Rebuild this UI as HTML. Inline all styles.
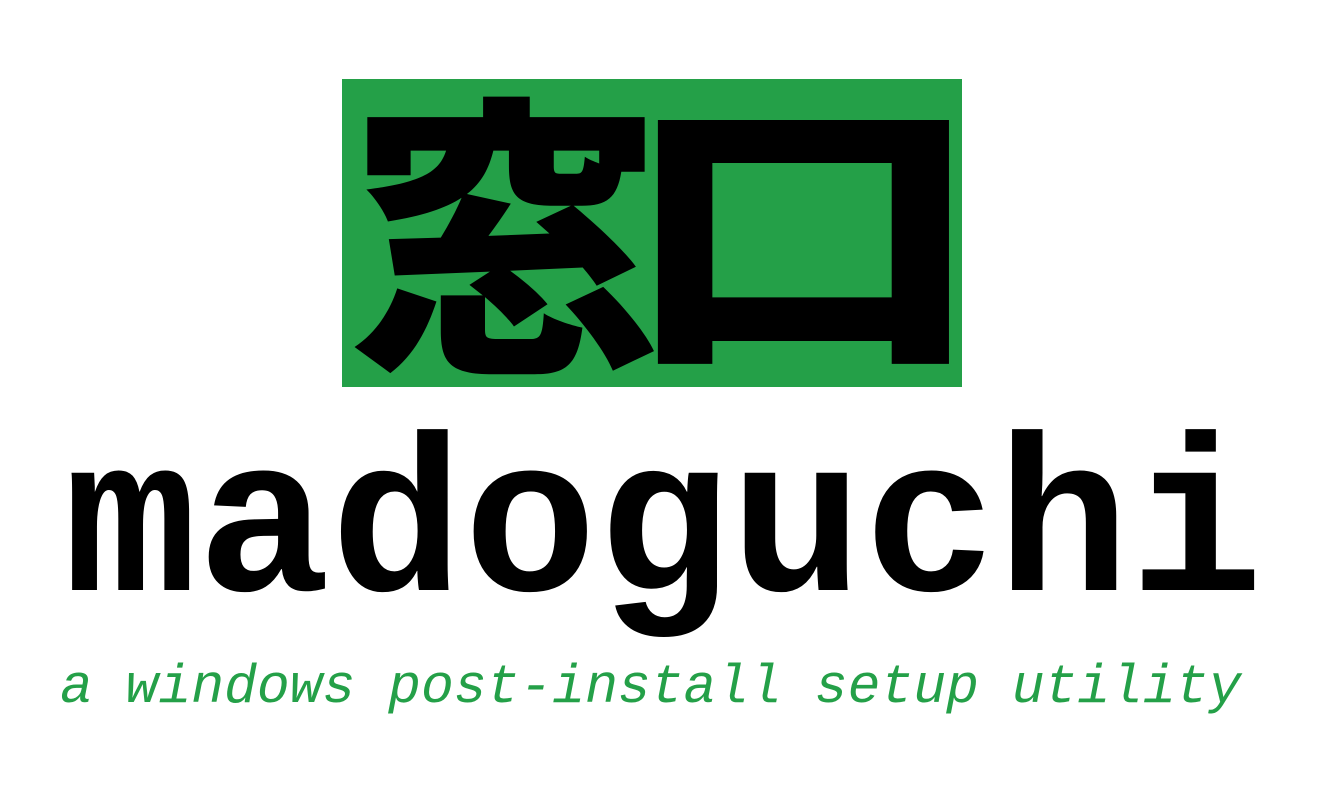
<!DOCTYPE html>
<html><head><meta charset="utf-8"><style>
html,body{margin:0;padding:0;background:#fff;width:1333px;height:800px;overflow:hidden;position:relative}
.box{position:absolute;left:342px;top:79px;width:620px;height:308px;background:#24a048}
.cjk{position:absolute;top:79px;font-family:"Noto Sans CJK JP","Noto Sans CJK SC",sans-serif;font-weight:900;font-size:306px;line-height:308px;color:#000;white-space:nowrap}
.c1{left:350px;transform-origin:5px 24px;transform:translate(0,-7px) scale(1.017,0.958)}
.c2{left:652px;transform-origin:28px 51px;transform:translate(-23px,-12px) scale(1.17,0.95)}
.name{position:absolute;left:64px;top:420px;font-family:"Liberation Mono",monospace;font-weight:bold;font-size:222px;line-height:222px;color:#000;white-space:nowrap}
.tag{position:absolute;left:60px;top:658px;font-family:"Liberation Mono",monospace;font-style:italic;font-size:54.7px;line-height:60px;color:#24a048;white-space:nowrap}
</style></head><body>
<div class="box"></div>
<div class="cjk c1">窓</div>
<div class="cjk c2">口</div>
<div class="name">madoguchi</div>
<div class="tag">a windows post-install setup utility</div>
</body></html>
